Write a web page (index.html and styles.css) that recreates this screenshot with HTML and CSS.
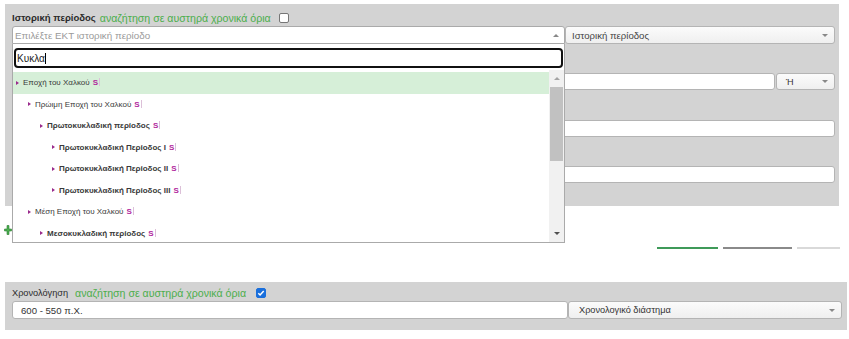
FILE: index.html
```html
<!DOCTYPE html>
<html lang="el">
<head>
    <meta charset="UTF-8">
    <title>Αναζήτηση</title>
    <link rel="stylesheet" href="styles.css">
</head>
<body>
    <!-- Historical period -->
    <div class="panel period">
        <div class="panel-head">
            <span class="label bold">Ιστορική περίοδος</span>
            <span class="strict">αναζήτηση σε αυστηρά χρονικά όρια</span>
            <span class="check"></span>
        </div>
        <div class="row">
            <div class="select-wrap">
                <div class="select open">
                    <span class="placeholder">Επιλέξτε ΕΚΤ ιστορική περίοδο</span>
                    <span class="arrow up"></span>
                </div>
                <div class="dropdown">
                    <div class="search-box">
                        <div class="search">Κυκλα<span class="caret"></span></div>
                    </div>
                    <div class="results">
                        <ul class="tree">
                            <li class="lvl0 active"><span class="tri"></span>Εποχή του Χαλκού<span class="tag">S</span></li>
                            <li class="lvl1"><span class="tri"></span>Πρώιμη Εποχή του Χαλκού<span class="tag">S</span></li>
                            <li class="lvl2 bold"><span class="tri"></span>Πρωτοκυκλαδική περίοδος<span class="tag">S</span></li>
                            <li class="lvl3 bold"><span class="tri"></span>Πρωτοκυκλαδική Περίοδος I<span class="tag">S</span></li>
                            <li class="lvl3 bold"><span class="tri"></span>Πρωτοκυκλαδική Περίοδος II<span class="tag">S</span></li>
                            <li class="lvl3 bold"><span class="tri"></span>Πρωτοκυκλαδική Περίοδος III<span class="tag">S</span></li>
                            <li class="lvl1"><span class="tri"></span>Μέση Εποχή του Χαλκού<span class="tag">S</span></li>
                            <li class="lvl2 bold"><span class="tri"></span>Μεσοκυκλαδική περίοδος<span class="tag">S</span></li>
                        </ul>
                        <div class="scrollbar">
                            <div class="sb-btn"><span class="arrow up light"></span></div>
                            <div class="sb-thumb"></div>
                            <div class="sb-track"></div>
                            <div class="sb-btn"><span class="arrow dark"></span></div>
                        </div>
                    </div>
                </div>
            </div>
            <div class="select grow kind">Ιστορική περίοδος<span class="arrow"></span></div>
        </div>
        <div class="row r2">
            <div class="input grow"></div>
            <div class="select op">Ή<span class="arrow"></span></div>
        </div>
        <div class="row r3"><div class="input grow"></div></div>
        <div class="row r4"><div class="input grow"></div></div>
    </div>

    <!-- Actions -->
    <div class="toolbar">
        <svg class="plus" width="8" height="10" viewBox="0 0 8 10">
            <path d="M3 0.5h2v3.5h2.5v2h-2.5v3.5h-2v-3.5h-2.5v-2h2.5z" fill="#4caf50" stroke="#2e7d32" stroke-width="0.6"/>
        </svg>
        <div class="btns">
            <span class="btn green"></span>
            <span class="btn gray"></span>
            <span class="btn light"></span>
        </div>
    </div>

    <!-- Dating -->
    <div class="panel dating">
        <div class="panel-head">
            <span class="label">Χρονολόγηση</span>
            <span class="strict">αναζήτηση σε αυστηρά χρονικά όρια</span>
            <span class="check checked">
                <svg width="8" height="8" viewBox="0 0 8 8"><path d="M1.3 4.2l1.8 1.8 3.6-3.9" fill="none" stroke="#fff" stroke-width="1.5"/></svg>
            </span>
        </div>
        <div class="row tall">
            <div class="input value">600 - 550 π.Χ.</div>
            <div class="select grow range">Χρονολογικό διάστημα<span class="arrow"></span></div>
        </div>
    </div>
</body>
</html>
```

FILE: styles.css
```css
body {
    margin: 0;
    font-family: "Liberation Sans", Arial, sans-serif;
    color: #333;
    background: #fff;
}
.panel {
    background-color: #d3d3d3;
    margin-left: 5px;
}
.period {
    width: 823px;
    margin-top: 4px;
    padding: 5px 4px 23px 7px;
}
.dating {
    width: 830px;
    padding: 2px 5px 11px 7px;
}
.panel-head {
    display: flex;
    align-items: center;
    height: 17px;
    font-size: 10px;
    white-space: nowrap;
}
.label {
    color: #2b2b2b;
    font-size: 9.2px;
    margin-right: 7px;
}
.bold {
    font-weight: bold;
}
.period .label {
    font-size: 9.5px;
    margin-right: 4px;
}
.strict {
    color: #4cae4c;
    font-size: 10.6px;
}
.check {
    box-sizing: border-box;
    width: 10px;
    height: 10px;
    border: 1px solid #767676;
    border-radius: 2px;
    background: #fff;
    margin-left: 8px;
    display: flex;
    align-items: center;
    justify-content: center;
}
.check.checked {
    background: #1a6fdc;
    border-color: #1a6fdc;
    margin-left: 10px;
}

/* rows of fields */
.row {
    display: flex;
    height: 18px;
}
.r2 {
    margin-top: 29px;
    height: 17px;
}
.r3 {
    margin-top: 30px;
    height: 17px;
}
.r4 {
    margin-top: 29px;
    height: 17px;
}
.grow {
    flex: 1;
}
.select,
.input {
    box-sizing: border-box;
    height: 100%;
    border: 1px solid #b4b4b4;
    border-radius: 3px;
    font-size: 9px;
    display: flex;
    align-items: center;
    padding: 0 6px;
    white-space: nowrap;
}
.select {
    background: linear-gradient(#fbfbfb, #efefef);
}
.input {
    background: #fff;
}
.kind {
    font-size: 9.6px;
    color: #444;
}
.op {
    width: 59px;
    margin-left: 1px;
    padding-left: 9px;
}
.value {
    width: 556px;
    font-size: 9.6px;
    padding-left: 8px;
}
.range {
    font-size: 9.2px;
    padding-left: 10px;
}
.arrow {
    margin-left: auto;
    width: 0;
    height: 0;
    border-left: 3px solid transparent;
    border-right: 3px solid transparent;
    border-top: 3px solid #888;
}
.arrow.up {
    border-top: 0;
    border-bottom: 3px solid #888;
}
.arrow.light {
    border-bottom-color: #a3a3a3;
}
.arrow.dark {
    border-top-color: #505050;
}

/* open select with dropdown */
.select-wrap {
    position: relative;
    width: 553px;
}
.select.open {
    background: #fff;
    border-color: #aaa;
    border-radius: 3px 3px 0 0;
    padding-left: 2px;
    padding-right: 5px;
}
.placeholder {
    color: #9a9a9a;
    font-size: 9.8px;
}
.dropdown {
    position: absolute;
    top: 18px;
    left: 0;
    width: 553px;
    box-sizing: border-box;
    border: 1px solid #aaa;
    border-top: 0;
    background: #fff;
    z-index: 10;
}
.search-box {
    padding: 4px 1px 2px 1px;
}
.search {
    box-sizing: border-box;
    height: 20px;
    border: 2px solid #111;
    border-radius: 4px;
    font-size: 10px;
    color: #222;
    padding: 0 1px;
    display: flex;
    align-items: center;
}
.caret {
    width: 1px;
    height: 11px;
    background: #000;
}
.results {
    display: flex;
    height: 172px;
}
.tree {
    flex: 1;
    margin: 0;
    padding: 2px 0 0 0;
    list-style: none;
    overflow: hidden;
}
.tree li {
    height: 21.5px;
    display: flex;
    align-items: center;
    font-size: 8px;
    color: #3a3a3a;
    white-space: nowrap;
}
.tree li.active {
    background-color: #d6efd8;
}
.lvl0 { padding-left: 3px; }
.lvl1 { padding-left: 15px; }
.lvl2 { padding-left: 27px; }
.lvl3 { padding-left: 39px; }
.tri {
    width: 0;
    height: 0;
    border-top: 2.5px solid transparent;
    border-bottom: 2.5px solid transparent;
    border-left: 3px solid #9a2a8c;
    margin-right: 4px;
}
.tag {
    color: #b1279d;
    font-weight: bold;
    margin-left: 3px;
}
.tag::after {
    content: "";
    display: inline-block;
    width: 1px;
    height: 8px;
    background: #dcc0d8;
    margin-left: 1px;
    vertical-align: -1px;
}
.scrollbar {
    width: 15px;
    background: #f1f1f1;
    display: flex;
    flex-direction: column;
}
.sb-btn {
    height: 17px;
    display: flex;
    align-items: center;
    justify-content: center;
}
.sb-btn .arrow {
    margin-left: 0;
}
.sb-thumb {
    height: 74px;
    margin: 0 1px;
    background: #c1c1c1;
}
.sb-track {
    flex: 1;
}

/* action bar */
.toolbar {
    height: 76px;
    display: flex;
    align-items: flex-start;
}
.plus {
    margin: 19px 0 0 4px;
}
.btns {
    margin: 41px 9px 0 auto;
    display: flex;
    gap: 5px;
}
.btn {
    height: 2px;
}
.btn.green {
    width: 61px;
    background: #3f9a59;
}
.btn.gray {
    width: 69px;
    background: #8a8a8a;
}
.btn.light {
    width: 43px;
    background: #d9d9d9;
}
.tall {
    height: 18px;
}
```
